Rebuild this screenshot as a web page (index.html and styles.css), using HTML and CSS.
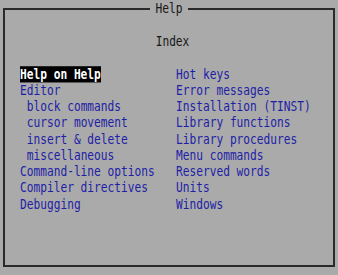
FILE: index.html
```html
<!DOCTYPE html>
<html lang="en">
<head>
  <meta charset="UTF-8">
  <meta name="viewport" content="width=device-width, initial-scale=1.0">
  <title>Help</title>
  <link rel="stylesheet" href="styles.css">
</head>
<body>
  <fieldset class="help-window">
    <legend class="help-title"><span class="dos">Help</span></legend>
    <h1 class="index-title"><span class="dos">Index</span></h1>
    <div class="index">
      <ul class="topics">
        <li class="dos"><span class="selected">Help on Help</span></li>
        <li class="dos">Editor</li>
        <li class="dos sub">block commands</li>
        <li class="dos sub">cursor movement</li>
        <li class="dos sub">insert &amp; delete</li>
        <li class="dos sub">miscellaneous</li>
        <li class="dos">Command-line options</li>
        <li class="dos">Compiler directives</li>
        <li class="dos">Debugging</li>
      </ul>
      <ul class="topics">
        <li class="dos">Hot keys</li>
        <li class="dos">Error messages</li>
        <li class="dos">Installation (TINST)</li>
        <li class="dos">Library functions</li>
        <li class="dos">Library procedures</li>
        <li class="dos">Menu commands</li>
        <li class="dos">Reserved words</li>
        <li class="dos">Units</li>
        <li class="dos">Windows</li>
      </ul>
    </div>
  </fieldset>
</body>
</html>
```
FILE: styles.css
```css
body {
  margin: 0;
  padding: 0 3px 8px 3px;
  height: 100vh;
  box-sizing: border-box;
  display: flex;
  flex-direction: column;
  background: #aaaaaa;
  font-family: "DejaVu Sans Mono", monospace;
  font-size: 11.2px;
  line-height: 16.25px;
  color: #181818;
}
.dos {
  display: inline-block;
  transform: scaleY(1.25);
}
li.dos {
  display: block;
}
.help-window {
  flex: 1;
  margin: 0;
  padding: 17px 0 0 0;
  min-width: 0;
  border: 2px solid #2a2a2a;
}
.help-title {
  margin: 0 auto;
  padding: 0 6px;
  line-height: 17px;
}
.index-title {
  margin: 0 0 16.25px 0;
  padding-left: 7px;
  text-align: center;
  font-size: 11.2px;
  font-weight: normal;
  line-height: 16.25px;
}
.index {
  display: grid;
  grid-template-columns: 156px auto;
  padding-left: 15px;
}
.topics {
  list-style: none;
  margin: 0;
  padding: 0;
  color: #1e1ea6;
}
.topics .sub {
  padding-left: 6.75px;
}
.selected {
  display: inline-block;
  height: 13px;
  line-height: 13px;
  background: #000;
  color: #fff;
  font-weight: bold;
}
```
